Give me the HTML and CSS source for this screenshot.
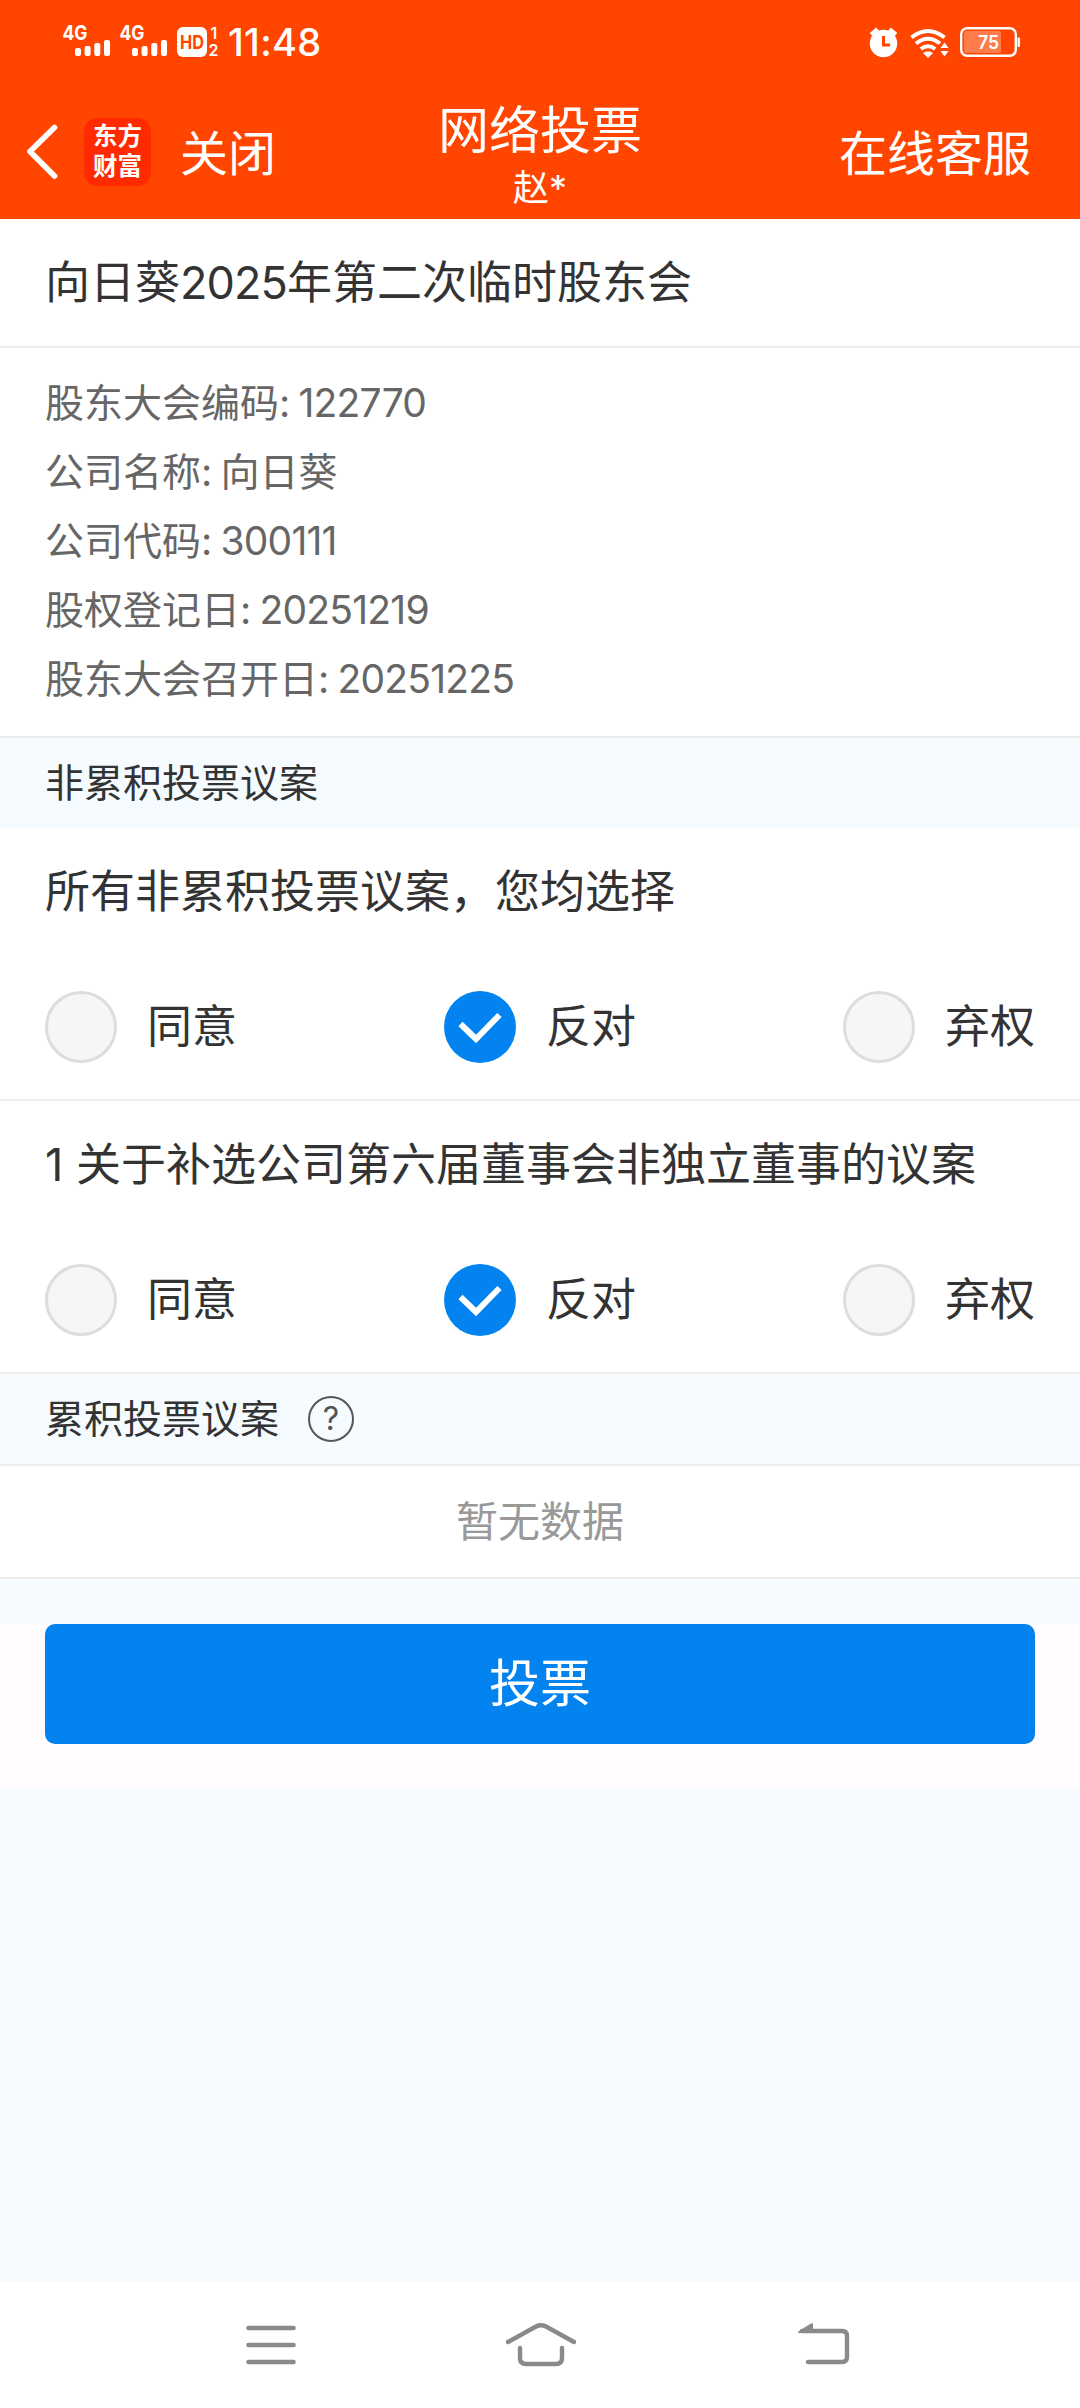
FILE: index.html
```html
<!DOCTYPE html>
<html lang="zh-CN">
<head>
<meta charset="utf-8">
<title>网络投票</title>
<link rel="stylesheet" href="styles.css">
</head>
<body>
<div class="screen">
  <header class="top">
    <div class="status">
      <svg class="status-left" width="160" height="40" viewBox="60 20 160 40">
        <g fill="#fff">
          <text class="net" x="62.5" y="40" textLength="25" lengthAdjust="spacingAndGlyphs">4G</text>
          <rect x="75" y="48" width="6" height="8" rx="2"/><rect x="84.6" y="46" width="6" height="10" rx="2"/><rect x="94.3" y="43" width="6" height="13" rx="2"/><rect x="104" y="40" width="6" height="16" rx="2"/>
          <text class="net" x="119.5" y="40" textLength="25" lengthAdjust="spacingAndGlyphs">4G</text>
          <rect x="132" y="48" width="6" height="8" rx="2"/><rect x="141.6" y="46" width="6" height="10" rx="2"/><rect x="151.3" y="43" width="6" height="13" rx="2"/><rect x="161" y="40" width="6" height="16" rx="2"/>
          <rect x="177" y="27" width="30" height="30" rx="6"/>
          <text class="hd" x="180" y="49" textLength="24" lengthAdjust="spacingAndGlyphs">HD</text>
          <text class="sim" x="210.500" y="38.500">1</text>
          <text class="sim" x="208.500" y="56">2</text>
        </g>
      </svg>
      <span class="clock">11:48</span>
      <svg class="status-right" width="154" height="34" viewBox="868 26 154 34">
        <g fill="#fff">
          <circle cx="883.500" cy="43.500" r="13.700"/>
          <path d="M871 34.500l6.500-5.500M889.500 29l6.500 5.500" stroke="#fff" stroke-width="4"/>
          <path d="M883.500 36v9h6.500" fill="none" stroke="#ff4500" stroke-width="3"/>
          <g fill="none" stroke="#fff" stroke-width="4">
            <path d="M911.500 37.500q16.500-13 33 0"/>
            <path d="M916 43.500q12-9.500 24 0"/>
            <path d="M920.800 49q7.200-5.500 14.400 0"/>
          </g>
          <path d="M923 53q5-3.500 10 0l-5 5z"/>
          <path d="M940.500 48l4-5.500 4 5.500zM940.500 51l4 5.500 4-5.500z"/>
          <rect x="961.200" y="28.200" width="54.600" height="27.600" rx="6" fill="none" stroke="#fff" stroke-width="2.400"/>
          <rect x="1017.500" y="37.500" width="2.500" height="9.500" rx="1"/>
          <rect x="964" y="31" width="37" height="22" rx="2" fill-opacity=".3"/>
          <text class="charge" x="978" y="49.300" textLength="21" lengthAdjust="spacingAndGlyphs">75</text>
        </g>
      </svg>
    </div>
    <nav class="bar">
      <div class="bar-left">
        <svg width="36" height="60" viewBox="24 122 36 60"><path d="M54.500 127.500L30 151.500l24.500 24.500" fill="none" stroke="#fff" stroke-width="5.600" stroke-linecap="round" stroke-linejoin="round"/></svg>
        <div class="logo"><span>东方</span><span>财富</span></div>
        <span class="close">关闭</span>
      </div>
      <div class="bar-title"><h1>网络投票</h1><small>赵*</small></div>
      <span class="service">在线客服</span>
    </nav>
  </header>

  <h2 class="meeting">向日葵<span class="num">2025</span>年第二次临时股东会</h2>
  <div class="details">
    <p>股东大会编码<span class="num">: 122770</span></p>
    <p>公司名称<span class="num">: </span>向日葵</p>
    <p>公司代码<span class="num">: 300111</span></p>
    <p>股权登记日<span class="num">: 20251219</span></p>
    <p>股东大会召开日<span class="num">: 20251225</span></p>
  </div>

  <div class="section">非累积投票议案</div>

  <div class="proposal">
    <p class="question">所有非累积投票议案，您均选择</p>
    <div class="options">
      <div class="option"><i class="radio"></i><span>同意</span></div>
      <div class="option"><svg width="72" height="72" viewBox="0 0 72 72"><circle cx="36" cy="36" r="36" fill="#0283ef"/><path d="M16.500 33L32 48 55.500 24" fill="none" stroke="#fff" stroke-width="6"/></svg><span>反对</span></div>
      <div class="option"><i class="radio"></i><span>弃权</span></div>
    </div>
  </div>
  <div class="proposal">
    <p class="question">1 关于补选公司第六届董事会非独立董事的议案</p>
    <div class="options">
      <div class="option"><i class="radio"></i><span>同意</span></div>
      <div class="option"><svg width="72" height="72" viewBox="0 0 72 72"><circle cx="36" cy="36" r="36" fill="#0283ef"/><path d="M16.500 33L32 48 55.500 24" fill="none" stroke="#fff" stroke-width="6"/></svg><span>反对</span></div>
      <div class="option"><i class="radio"></i><span>弃权</span></div>
    </div>
  </div>

  <div class="section lined">累积投票议案<i class="help">?</i></div>
  <div class="empty">暂无数据</div>
  <div class="action"><button class="vote">投票</button></div>

  <footer class="system">
    <svg width="50" height="44" viewBox="246 2323 50 44"><path d="M248.500 2328h45M248.500 2345h45M248.500 2362h45" stroke="#8b898a" stroke-width="4.600" stroke-linecap="round"/></svg>
    <svg class="home" width="70" height="44" viewBox="506 2323 70 44"><g fill="none" stroke="#8b898a" stroke-width="4.400" stroke-linecap="round"><path d="M508 2342L536 2326.500q5-2.500 10 0L574 2342"/><path d="M520 2348v10q0 6 6 6h30q6 0 6-6v-10"/></g></svg>
    <svg width="52" height="44" viewBox="798 2323 52 44"><path d="M802 2331h40q5 0 5 5v21q0 5-5 5h-34" fill="none" stroke="#8b898a" stroke-width="4.400" stroke-linecap="round"/><path d="M799 2331l12-7.500q2-1 2 1v8.500h-14q-2-.5 0-2z" fill="#8b898a"/></svg>
  </footer>
</div>
</body>
</html>
```
FILE: styles.css
```css
* { box-sizing: border-box; }
body { margin: 0; font-family: Inter, "Noto Sans CJK SC", sans-serif; color: #333; }
h1, h2, p { margin: 0; font-weight: 400; }
i { font-style: normal; }
svg { display: block; flex: none; }

.screen { width: 1080px; height: 2408px; display: flex; flex-direction: column; background: #f5fbff; }
.num { letter-spacing: -.02em; word-spacing: -.03em; }

.top { height: 219px; background: #ff4500; color: #fff; }
.status { height: 84px; padding: 0 58px 0 60px; display: flex; align-items: center; }
.status-left { margin-top: -4px; }
.clock { margin-left: 8px; font-size: 38px; font-weight: 500; line-height: 84px; letter-spacing: .3px; }
.status-right { margin-left: auto; margin-top: 2px; }
.net { font-size: 20px; font-weight: 700; }
.hd { font-size: 19px; font-weight: 700; fill: #ff4500; }
.sim { font-size: 16px; font-weight: 600; }
.charge { font-size: 19px; font-weight: 600; }

.bar { height: 135px; padding: 0 49px 0 24px; display: grid; grid-template-columns: 1fr auto 1fr; align-items: center; }
.bar-left { display: flex; align-items: center; }
.bar-left, .service { font-size: 48px; line-height: 72px; }
.logo { width: 67px; height: 68px; margin-left: 24px; padding-top: 3px; border-radius: 13px; background: #ff2a00; display: flex; flex-direction: column; align-items: center; font-size: 24.5px; font-weight: 700; line-height: 30px; }
.close { margin-left: 29px; padding-top: 4px; }
.bar-title { display: flex; flex-direction: column; align-items: center; margin-left: 25px; padding-top: 10px; }
.bar-title h1 { font-size: 51px; line-height: 62px; }
.bar-title small { font-size: 36px; line-height: 52px; }
.service { justify-self: end; padding-top: 4px; }

.meeting { height: 129px; padding: 0 45px; background: #fff; border-bottom: 2px solid #ededed; font-size: 45px; line-height: 127px; }
.details { height: 390px; padding: 20px 45px 0; background: #fff; border-bottom: 2px solid #ededed; color: #666; font-size: 39px; line-height: 69px; }
.details p { height: 69px; }

.section { height: 90px; padding: 0 45px; display: flex; align-items: center; font-size: 39px; line-height: 58px; }
.lined { height: 92px; border-bottom: 2px solid #ededed; }
.help { width: 46px; height: 46px; margin-left: 29px; border: 2.5px solid #555; border-radius: 50%; color: #555; font-size: 32px; line-height: 41px; text-align: center; }

.proposal { height: 273px; padding: 31px 45px 0; background: #fff; border-bottom: 2px solid #ededed; }
.question { font-size: 45px; line-height: 66px; }
.options { margin-top: 66px; display: flex; justify-content: space-between; }
.option { display: flex; align-items: center; gap: 30px; font-size: 45px; line-height: 66px; }
.radio { width: 72px; height: 72px; border: 3px solid #dfdcde; border-radius: 50%; background: #f6f6f6; }

.empty { height: 113px; background: #fff; border-bottom: 2px solid #ededed; color: #999; font-size: 42px; line-height: 111px; text-align: center; }
.action { height: 166px; margin-top: 45px; padding: 0 45px; background: #fffbff; }
.vote { display: block; width: 100%; height: 120px; padding: 0; border: 0; border-radius: 10px; background: #0283ef; color: #fff; font: inherit; font-size: 51px; line-height: 120px; }

.system { height: 126px; margin-top: auto; padding: 0 230px 0 246px; background: #fff; display: flex; align-items: center; justify-content: space-between; }
.home { margin-right: 12px; }
```
